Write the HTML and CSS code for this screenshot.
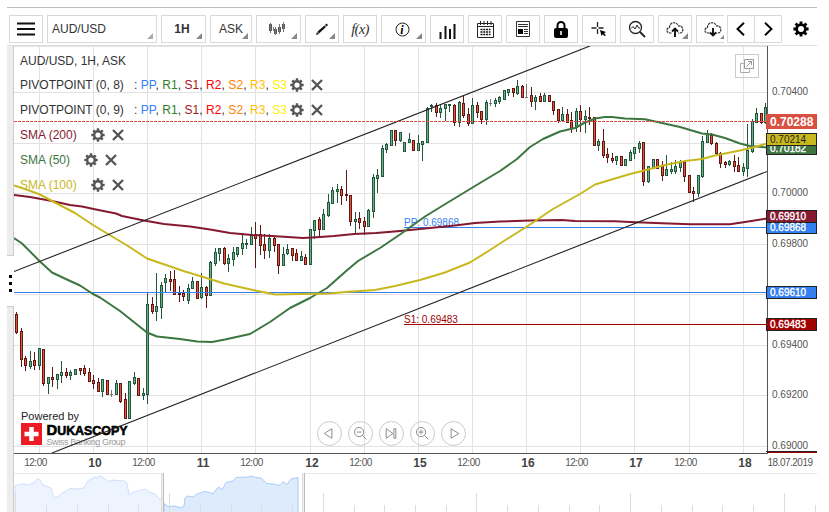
FILE: index.html
```
<!DOCTYPE html>
<html lang="en">
<head>
  <meta charset="utf-8">
  <title>AUD/USD Chart</title>
  <link rel="stylesheet" href="styles.css">
</head>
<body>
  <svg class="defs" width="0" height="0">
    <symbol id="gear" viewBox="0 0 16 16">
      <circle class="gear-ring" cx="8" cy="8" r="4.400"/>
      <path class="gear-teeth" d="M8 .4v2.800M8 12.800v2.800M.4 8h2.800M12.800 8h2.800M2.600 2.600l2 2M11.400 11.400l2 2M2.600 13.400l2-2M11.400 4.600l2-2"/>
    </symbol>
    <symbol id="cross" viewBox="0 0 12 12">
      <path d="M1 1l10 10M11 1L1 11" fill="none" stroke="#555" stroke-width="2.300"/>
    </symbol>
  </svg>

  <div class="app">
    <div class="toolbar">
      <button class="btn"><svg width="18" height="14"><path d="M0 1.500h18M0 7h18M0 12.500h18" stroke="#111" stroke-width="2.200"/></svg></button>
      <button class="btn symbol menu">AUD/USD</button>
      <button class="btn period menu">1H</button>
      <button class="btn side menu">ASK</button>
      <button class="btn medium menu shift">
        <svg width="16" height="14"><path d="M1.500 2v7M6.500 7v5M10.500 5v5M14.500 2v5" stroke="#111" stroke-width="2.400"/><path d="M1.500 1v10M4.500 5v4M6.500 5v8M10.500 2v10M14.500 0v10" stroke="#777" stroke-width="1"/></svg>
      </button>
      <button class="btn menu"><svg width="14" height="13"><path d="M1 12l1-3 2 2zM2.500 8.500l7-6 1.500 1.500-7 6.500zM10 2l1.500-1.500L13 2l-1.500 1.500z" fill="#111"/></svg></button>
      <button class="btn fx">f(x)</button>
      <button class="btn medium menu shift">
        <svg width="15" height="15"><circle cx="7.500" cy="7.500" r="6.500" fill="none" stroke="#222"/><text class="info" x="5.300" y="11.500">i</text></svg>
      </button>
      <button class="btn low"><svg width="17" height="16"><path d="M1.500 9v7M6.500 3v13M11 6v10M15.500 1v15" stroke="#111" stroke-width="2"/></svg></button>
      <button class="btn"><svg width="19" height="19"><path d="M1.500 3.500h16v14h-16zM1.500 6.500h16" fill="none" stroke="#222"/><path d="M4.500 1v4M8 1v4M11.500 1v4M15 1v4" stroke="#222"/><path d="M4.500 9.500h10M4.500 12h10M4.500 14.500h10" stroke="#111" stroke-width="1.600" stroke-dasharray="2 .8"/></svg></button>
      <button class="btn"><svg width="14" height="16"><path d="M.5.5h13v15H.5z" fill="none" stroke="#333"/><path d="M2 3.500h10M2 5.500h10M8 8.500h4M8 10.500h4M8 12.500h4" stroke="#333"/><path d="M2 8h5v5H2z" fill="#000"/></svg></button>
      <button class="btn"><svg width="14" height="17"><path d="M3.500 8V4.500a3.500 3.500 0 0 1 7 0V8" fill="none" stroke="#000" stroke-width="2"/><rect x="0" y="7" width="14" height="10" rx="2"/><path d="M7 10v4" stroke="#fff" stroke-width="1.600"/></svg></button>
      <button class="btn"><svg width="16" height="16"><path d="M6.500 1v5M6.500 8v5M.5 7h5M7.500 7h5" stroke="#222" stroke-width="1.300"/><path d="M9 9l6 2-2 1.200 1.800 2-1 1-2-2L10.500 15z"/></svg></button>
      <button class="btn"><svg width="18" height="18"><circle cx="7.500" cy="7.500" r="6" fill="none" stroke="#222" stroke-width="1.300"/><path d="M3 8.500l2-2 2 2.500 2-4 1.500 3H12" fill="none" stroke="#222"/><path d="M12 12l5 5" stroke="#222" stroke-width="1.800"/></svg></button>
      <button class="btn menu"><svg width="18" height="16"><path d="M5.500 12H4C0 12 0 7 3.500 6.500 3.500 1 10.500 0 12.500 5c5-1 6 6.500 1.500 7h-2" fill="none" stroke="#333" stroke-width="1.200" stroke-dasharray="2.500 .7"/><path d="M9 16V9M6 10.500L9 7.500l3 3" fill="none" stroke="#111" stroke-width="1.900"/></svg></button>
      <button class="btn menu clipped"><svg width="18" height="16"><path d="M5.500 12H4C0 12 0 7 3.500 6.500 3.500 1 10.500 0 12.500 5c5-1 6 6.500 1.500 7h-2" fill="none" stroke="#333" stroke-width="1.200" stroke-dasharray="2.500 .7"/><path d="M9 7v7M6 11.500l3 3 3-3" fill="none" stroke="#111" stroke-width="1.900"/></svg></button>
      <div class="pager">
        <button class="btn"><svg width="10" height="14"><path d="M8 .8L1.500 7 8 13.200" fill="none" stroke="#000" stroke-width="1.900"/></svg></button>
        <button class="btn"><svg width="10" height="14"><path d="M2 .8L8.500 7 2 13.200" fill="none" stroke="#000" stroke-width="1.900"/></svg></button>
      </div>
      <button class="settings"><svg width="16" height="16"><use href="#gear"/></svg></button>
    </div>

    <div class="workspace">
      <div class="gutter">
        <div class="grip"><i></i><i></i><i></i></div>
      </div>
      <div class="charts">
        <svg id="chart" class="chart" width="803" height="427" viewBox="14 46 803 427"></svg>
        <svg id="navigator" class="navigator" width="803" height="39" viewBox="14 473 803 39"></svg>

        <div class="legend">
          <div class="row title">AUD/USD, 1H, ASK</div>
          <div class="row"><span class="name">PIVOTPOINT (0, 8)</span><span class="levels">: <b class="pp">PP</b>, <b class="r1">R1</b>, <b class="s1">S1</b>, <b class="r2">R2</b>, <b class="s2">S2</b>, <b class="r3">R3</b>, <b class="s3">S3</b></span><svg class="cog"><use href="#gear"/></svg><svg class="close"><use href="#cross"/></svg></div>
          <div class="row"><span class="name">PIVOTPOINT (0, 9)</span><span class="levels">: <b class="pp">PP</b>, <b class="r1">R1</b>, <b class="s1">S1</b>, <b class="r2">R2</b>, <b class="s2">S2</b>, <b class="r3">R3</b>, <b class="s3">S3</b></span><svg class="cog"><use href="#gear"/></svg><svg class="close"><use href="#cross"/></svg></div>
          <div class="row sma"><span class="sma200">SMA (200)</span><svg class="cog"><use href="#gear"/></svg><svg class="close"><use href="#cross"/></svg></div>
          <div class="row sma"><span class="sma50">SMA (50)</span><svg class="cog"><use href="#gear"/></svg><svg class="close"><use href="#cross"/></svg></div>
          <div class="row sma"><span class="sma100">SMA (100)</span><svg class="cog"><use href="#gear"/></svg><svg class="close"><use href="#cross"/></svg></div>
        </div>

        <button class="popout"><svg width="14" height="14"><path d="M3.500 4.500h-3v9h9v-3" fill="none" stroke="#aaa"/><path d="M4.500.5h9v9h-9zM6.500 7.500l5-5M8 2.500h3.500V6" fill="none" stroke="#999"/></svg></button>

        <div class="controls">
          <button><svg viewBox="0 0 24 24"><path d="M14.500 7v10L6.500 12z"/></svg></button>
          <button><svg viewBox="0 0 24 24"><circle cx="10.500" cy="10.500" r="4.800"/><path d="M8 10.500h5M14 14l4 4"/></svg></button>
          <button><svg viewBox="0 0 24 24"><path d="M6.500 7v10l7-5zM14.500 7h2v10h-2z"/></svg></button>
          <button><svg viewBox="0 0 24 24"><circle cx="10.500" cy="10.500" r="4.800"/><path d="M8 10.500h5M10.500 8v5M14 14l4 4"/></svg></button>
          <button><svg viewBox="0 0 24 24"><path d="M9.500 7v10l8-5z"/></svg></button>
        </div>
      </div>
    </div>
  </div>
  <script src="chart.js"></script>
</body>
</html>
```
FILE: styles.css
```
body {
  margin: 0;
  background: #fff;
  font-family: "Liberation Sans", Arial, sans-serif;
  font-size: 12px;
  color: #333;
  overflow: hidden;
}

.defs {
  position: absolute;
}

.app {
  width: 810px;
  margin: 7px 0 0 7px;
  border-top: 1px solid #bbb;
}

/* toolbar */
.toolbar {
  display: flex;
  gap: 4px;
  box-sizing: border-box;
  height: 38px;
  padding: 7px 0 2px 2px;
  border-bottom: 1px solid #ddd;
}

.btn {
  position: relative;
  display: flex;
  align-items: center;
  justify-content: center;
  box-sizing: border-box;
  flex: none;
  width: 34px;
  height: 28px;
  padding: 0;
  border: 1px solid #d9d9d9;
  background: #fff;
  font: 12px "Liberation Sans", Arial, sans-serif;
  color: #333;
}

.menu::after {
  content: "";
  position: absolute;
  right: 3px;
  bottom: 3px;
  border-left: 6px solid transparent;
  border-bottom: 6px solid #888;
}

.symbol {
  width: 110px;
  justify-content: flex-start;
  padding-left: 4px;
}

.symbol::after {
  border-bottom-color: #aaa;
}

.period {
  width: 45px;
  padding-right: 3px;
  font-weight: bold;
}

.side {
  width: 42px;
}

.medium {
  width: 45px;
}

.shift {
  padding-right: 3px;
}

.low {
  padding-top: 3px;
}

.fx {
  font: italic 15px "Liberation Serif", serif;
  letter-spacing: -0.8px;
}

.info {
  font: italic bold 12px "Liberation Serif", serif;
}

.clipped {
  width: 28px;
  padding-left: 4px;
  border-right: none;
}

.clipped::after {
  right: 0;
  border-left-width: 4px;
  border-bottom-width: 4px;
}

.pager {
  display: flex;
  margin-left: -1px;
}

.pager .btn {
  width: 28px;
}

.pager .btn + .btn {
  margin-left: -1px;
}

.settings {
  display: flex;
  align-items: center;
  margin-left: 7px;
  padding: 0;
  height: 28px;
  border: none;
  background: none;
  color: #000;
}

.gear-ring {
  fill: none;
  stroke: currentColor;
  stroke-width: 2.8;
}

.gear-teeth {
  stroke: currentColor;
  stroke-width: 2.8;
}

/* workspace */
.workspace {
  display: flex;
}

.gutter {
  box-sizing: border-box;
  width: 7px;
  height: 466px;
  padding-top: 209px;
  border-right: 1px solid #ccc;
  background: #ededed;
}

.grip {
  display: flex;
  flex-direction: column;
  align-items: center;
  gap: 4px;
  box-sizing: border-box;
  width: 7px;
  height: 52px;
  padding-top: 19px;
  background: #fff;
  border-top: 1px solid #ccc;
  border-bottom: 1px solid #ccc;
}

.grip i {
  width: 3px;
  height: 3px;
  background: #000;
}

.charts {
  position: relative;
  width: 803px;
}

.chart,
.navigator {
  display: block;
}

.legend {
  position: absolute;
  left: 6px;
  top: 2px;
}

.row {
  display: flex;
  align-items: center;
  height: 25px;
  white-space: pre;
}

.row.title {
  height: 24px;
  padding-top: 1px;
  box-sizing: border-box;
}

.name {
  width: 114px;
}

.levels {
  letter-spacing: 0.06px;
}

.row b {
  font-weight: normal;
}

.pp { color: #347ff0; }
.r1 { color: #2e7d1e; }
.s1 { color: #a81616; }
.r2 { color: #f00; }
.s2 { color: #ff8000; }
.r3 { color: #ffc000; }
.s3 { color: #ffee00; }
.sma200 { color: #85192f; }
.sma50 { color: #3c7640; }
.sma100 { color: #c9b71e; }

.cog {
  width: 14px;
  height: 14px;
  margin-left: 3px;
  color: #555;
}

.close {
  width: 12px;
  height: 12px;
  margin-left: 7px;
}

.sma .cog {
  margin-left: 14px;
}

.popout {
  position: absolute;
  left: 721px;
  top: 8px;
  display: flex;
  align-items: center;
  justify-content: center;
  box-sizing: border-box;
  width: 24px;
  height: 24px;
  padding: 0;
  border: 1px solid #ccc;
  background: none;
}

.controls {
  position: absolute;
  left: 303px;
  top: 375px;
  display: flex;
  gap: 6px;
}

.controls button {
  box-sizing: border-box;
  width: 25px;
  height: 25px;
  padding: 0;
  border: 1px solid #ccc;
  border-radius: 50%;
  background: none;
}

.controls svg {
  display: block;
  width: 23px;
  height: 23px;
  fill: none;
  stroke: #888;
}

/* chart drawing */
.grid { stroke: #e2e2e2; }
.axis { stroke: #555; }
.trend { stroke: #222; stroke-width: 1.1; }
.last { stroke: #d85040; stroke-dasharray: 3 1; }
.level-pp { stroke: #347ff0; }
.level-s1 { stroke: #a00000; }
.line { fill: none; stroke-width: 2; stroke-linejoin: round; }
.line200 { stroke: #85192f; }
.line50 { stroke: #3c7640; }
.line100 { stroke: #c9b71e; }
.up { fill: #68b08b; stroke: #23573c; }
.down { fill: #e8523c; stroke: #5c1a12; }
.flat { fill: none; stroke: #777; }

.price { font-size: 10px; fill: #555; }
.hour { font-size: 10px; fill: #555; letter-spacing: -0.5px; text-anchor: middle; }
.day { font-size: 12px; font-weight: bold; fill: #444; text-anchor: middle; }
.date { font-size: 10px; fill: #555; letter-spacing: -0.5px; }
.text-pp { font-size: 10px; fill: #347ff0; }
.text-s1 { font-size: 10px; fill: #a00000; }
.tag { stroke: #222; }
.tag-text { font-size: 10px; fill: #fff; stroke: #fff; stroke-width: 0.35; }
.tag-dark { fill: #222; stroke: none; }
.tag-last { font-size: 12px; font-weight: bold; fill: #fff; }

.powered { font-size: 11px; fill: #222; }
.brand { font-weight: bold; fill: #000; stroke: #000; stroke-width: 0.6; font-size: 13px; }
.brand .cap { font-size: 15.5px; }
.group { font-size: 9px; fill: #999; }

.nav-line { stroke: #e8e8e8; }
.nav-out { fill: #edf4ff; stroke: #cfe1fa; }
.nav-in { fill: #deebfd; stroke: #a9cbf8; }
.nav-tick { stroke: #ddd; }
```
FILE: chart.js
```
// x, high, low, body top, body bottom, direction (u = up, d = down, f = flat)
var candles = [
  [16,312,334,314,332,'d'],[21,328,367,331,359,'d'],[25,356,371,358,365,'d'],[30,351,369,361,366,'u'],
  [34,352,370,360,365,'d'],[39,348,370,348,365,'u'],[43,349,386,349,383,'d'],[48,377,394,377,383,'u'],
  [52,367,387,377,379,'d'],[57,374,389,374,379,'u'],[61,361,383,372,375,'u'],[66,368,378,372,375,'d'],
  [70,370,380,372,375,'u'],[75,369,375,369,374,'u'],[80,368,375,368,370,'d'],[84,365,376,368,373,'d'],
  [89,368,382,372,381,'d'],[93,375,389,380,383,'d'],[98,378,392,382,391,'d'],[102,379,397,379,391,'u'],
  [107,380,395,380,394,'d'],[111,390,397,394,394,'f'],[116,380,395,383,394,'u'],[120,383,403,383,401,'d'],
  [125,393,419,399,418,'d'],[129,381,419,381,418,'u'],[134,372,385,377,383,'u'],[138,378,396,378,395,'d'],
  [143,388,400,393,395,'u'],[147,292,404,304,394,'u'],[152,297,314,304,311,'d'],[156,273,321,306,311,'u'],
  [161,282,319,285,307,'u'],[165,274,292,278,282,'u'],[170,271,291,279,281,'d'],[174,270,295,279,294,'d'],
  [179,286,302,293,294,'d'],[183,290,301,293,296,'d'],[188,284,304,288,300,'u'],[192,277,289,281,288,'u'],
  [197,281,299,281,298,'d'],[201,273,299,287,297,'u'],[206,286,308,287,295,'d'],[210,261,296,262,295,'u'],
  [215,248,266,252,263,'u'],[219,248,261,248,253,'u'],[224,247,265,248,263,'d'],[228,254,272,258,263,'u'],
  [233,247,266,252,259,'u'],[237,247,257,247,254,'u'],[242,233,255,243,248,'u'],[246,239,249,243,244,'u'],
  [251,227,245,234,244,'u'],[255,222,268,234,238,'d'],[260,225,255,234,245,'d'],[264,234,259,244,250,'d'],
  [269,234,258,238,250,'u'],[274,237,252,238,245,'d'],[278,244,274,244,265,'d'],[283,247,266,254,265,'u'],
  [287,244,255,249,253,'u'],[292,248,261,248,255,'d'],[296,249,261,253,260,'d'],[301,251,261,256,260,'u'],
  [305,254,265,257,264,'d'],[310,229,265,229,264,'u'],[314,220,239,220,230,'u'],[319,217,236,219,229,'d'],
  [323,209,230,214,229,'u'],[328,194,217,202,215,'u'],[332,187,204,190,203,'u'],[337,184,203,189,191,'u'],
  [341,186,205,189,195,'d'],[346,170,201,194,195,'d'],[350,195,226,195,221,'d'],[355,212,233,219,221,'u'],
  [359,212,229,218,222,'d'],[364,217,235,221,226,'d'],[368,209,227,210,226,'u'],[373,174,218,177,211,'u'],
  [377,169,193,175,178,'u'],[382,145,177,148,176,'u'],[386,143,153,144,149,'u'],[391,130,146,130,145,'u'],
  [395,130,146,130,140,'d'],[400,132,142,132,140,'u'],[404,142,152,142,151,'u'],[409,133,143,139,142,'u'],
  [413,140,151,140,150,'d'],[418,135,151,143,150,'u'],[422,141,161,141,144,'u'],[427,107,143,108,142,'u'],
  [431,104,112,105,106,'u'],[436,103,117,105,112,'d'],[440,104,118,108,112,'u'],[445,104,121,104,108,'u'],
  [449,104,112,104,105,'u'],[454,104,126,105,122,'d'],[459,101,127,102,122,'u'],[463,96,118,103,115,'d'],
  [468,108,126,114,123,'d'],[472,98,124,105,123,'u'],[477,102,118,105,112,'d'],[481,111,124,111,119,'d'],
  [486,100,125,102,119,'u'],[490,99,106,103,103,'f'],[495,98,107,100,103,'u'],[499,96,104,97,101,'u'],
  [504,90,100,90,99,'u'],[508,89,96,89,92,'u'],[513,88,97,88,92,'d'],[517,80,95,86,93,'u'],
  [522,85,98,86,97,'d'],[526,84,98,97,97,'f'],[531,87,107,95,101,'d'],[535,95,110,97,101,'u'],
  [540,93,102,96,101,'d'],[544,93,102,95,101,'u'],[549,95,102,95,101,'d'],[553,101,115,101,110,'d'],
  [558,109,123,109,120,'d'],[562,107,121,114,120,'u'],[567,109,123,114,122,'d'],[571,112,133,120,128,'d'],
  [576,108,132,111,127,'u'],[580,105,132,111,119,'d'],[585,110,133,116,119,'u'],[589,107,125,117,118,'d'],
  [594,117,146,117,145,'d'],[598,139,151,141,145,'u'],[603,129,158,141,155,'d'],[607,148,163,154,157,'d'],
  [612,153,163,158,160,'d'],[616,156,165,156,160,'u'],[621,156,166,156,165,'d'],[625,159,166,159,165,'u'],
  [630,150,161,152,160,'u'],[634,147,159,147,153,'u'],[639,141,153,143,148,'u'],[643,142,186,142,181,'d'],
  [648,166,183,166,181,'u'],[653,159,169,159,168,'u'],[657,159,169,159,168,'d'],[662,161,181,166,175,'d'],
  [666,155,176,169,175,'u'],[671,162,174,169,171,'u'],[675,160,174,166,171,'u'],[680,160,172,162,167,'u'],
  [684,162,182,162,176,'d'],[689,175,193,175,192,'d'],[693,187,202,191,193,'d'],[698,175,197,175,193,'u'],
  [702,136,178,141,176,'u'],[707,130,143,134,142,'u'],[711,133,145,135,143,'d'],[716,142,155,143,153,'d'],
  [720,152,168,153,163,'d'],[725,161,168,162,164,'d'],[729,160,166,161,164,'u'],[734,155,172,161,166,'d'],
  [738,157,172,165,171,'d'],[743,163,176,167,171,'u'],[747,124,177,150,168,'u'],[752,119,153,121,151,'u'],
  [756,108,123,113,122,'u'],[761,113,124,113,122,'d'],[765,103,124,107,122,'u']
];

var sma200 = '14,195 30,197 52,201 70,205 82,206.5 96,209.5 116,213.5 122,216 144,220.5 164,224 190,226.5 210,229.5 230,233 252,235 280,236.5 303,238 320,237 334,236 354,234 376,233 400,231 430,228 455,225.5 475,223 500,221.5 530,220.5 562,220 575,221 615,221.2 630,222 662,223.2 690,224.3 730,224.3 745,222 767,218.5';
var sma100 = '14,185.5 25,189 40,194.5 52,201 75,213 93,225 108,234 128,246 147,258.5 185,271.5 200,276 224,283.5 253,290 275,294.5 330,293.5 345,292 375,290 395,286 420,280 445,272.5 470,262.5 490,250 507,239 527,226.5 553,209 580,194 595,184.5 610,180 630,174 650,169 665,165 685,161 702,159 715,155.5 740,150.5 755,147 767,143.5';
var sma50 = '14,238 22,243.5 40,261.5 52,272.5 68,280 80,285.5 93,294 100,297.5 120,311 147,332.5 157,336.5 180,339 197,341.5 212,342 225,339.5 250,334 270,322 290,308 310,298 327,288 345,272 358,261 380,248 400,234.5 425,216.5 447,203 475,186 500,171 517,159 530,147 543,139 560,131.5 575,128 585,122.5 595,118.5 605,117 612,117 625,118.5 645,119.3 662,123 680,127 702,133.5 712,134.5 725,138 740,143.5 750,146 767,147.5';

function line(cls, x1, y1, x2, y2) {
  return '<line class="' + cls + '" x1="' + x1 + '" y1="' + y1 + '" x2="' + x2 + '" y2="' + y2 + '"/>';
}

function text(cls, x, y, value) {
  return '<text class="' + cls + '" x="' + x + '" y="' + y + '">' + value + '</text>';
}

function tag(y, h, color, value, cls) {
  return '<rect class="tag" x="766.5" y="' + y + '" width="50" height="' + h + '" fill="' + color + '"/>' +
    text(cls || 'tag-text', 770, y + h - 2.5, value);
}

var gridX = [39.5,93.5,147.5,201.5,255.5,310.5,364.5,418.5,472.5,526.5,580.5,634.5,689.5,743.5];
var gridY = [92.5,143.5,193.5,244.5,294.5,345.5,395.5,446.5];
var days = ['10','11','12','15','16','17','18'];

var out = '';
gridX.forEach(function (x) { out += line('grid', x, 46, x, 453); });
gridY.forEach(function (y) { out += line('grid', 14, y, 767, y); });
out += line('grid', 14, 46.5, 767, 46.5);

// branding sits under the series
out += text('powered', 21, 420, 'Powered by');
out += '<rect x="21" y="423" width="21" height="22" fill="#ed1c24"/>';
out += '<path d="M24.5 434h14M31.5 427v14" stroke="#fff" stroke-width="4.5"/>';
out += '<text class="brand" x="46.5" y="435" textLength="81" lengthAdjust="spacingAndGlyphs"><tspan class="cap">D</tspan>UKASCOPY</text>';
out += '<text class="group" x="46.5" y="445" textLength="79">Swiss Banking Group</text>';

candles.forEach(function (c) {
  var x = c[0] + 0.5;
  var cls = c[5] === 'u' ? 'up' : c[5] === 'd' ? 'down' : 'flat';
  out += line(cls, x, c[1], x, c[2]);
  if (cls === 'flat') {
    out += line(cls, x - 1.5, c[3] + 0.5, x + 1.5, c[3] + 0.5);
  } else {
    out += '<rect class="' + cls + '" x="' + (x - 1) + '" y="' + (c[3] + 0.5) + '" width="2" height="' + (c[4] - c[3]) + '"/>';
  }
});

out += text('text-pp', 404, 226, 'PP: 0.69868') + text('text-s1', 404, 323, 'S1: 0.69483');
out += line('level-pp', 404, 227.5, 767, 227.5);
out += line('level-pp', 14, 292.5, 767, 292.5);
out += line('level-s1', 404, 324.5, 767, 324.5);
out += '<polyline class="line line200" points="' + sma200 + '"/>';
out += '<polyline class="line line50" points="' + sma50 + '"/>';
out += '<polyline class="line line100" points="' + sma100 + '"/>';
out += line('trend', 14, 271.5, 590, 46) + line('trend', 52, 453, 767, 171.5);
out += line('last', 14, 121.5, 767, 121.5);

// axes
out += line('axis', 767.5, 46, 767.5, 454) + line('axis', 14, 453.5, 768, 453.5);
[['0.70400',95],['0.70000',196],['0.69800',247],['0.69400',348],['0.69200',398],['0.69000',449]].forEach(function (p) {
  out += text('price', 772, p[1], p[0]);
});
gridX.forEach(function (x, i) {
  if (i % 2) out += text('day', x + 1.5, 467, days[(i - 1) / 2]);
  else out += text('hour', x - 4, 466, '12:00');
});
out += text('date', 767.5, 466, '18.07.2019');

out += tag(143.5, 11, '#3c7640', '0.70182');
out += tag(133.5, 12, '#c9b71e', '0.70214', 'tag-text tag-dark');
out += '<rect x="766" y="114" width="51" height="15" fill="#d85040"/>' + text('tag-last', 770, 125.5, '0.70288');
out += tag(210.5, 12, '#85192f', '0.69910');
out += tag(222.5, 11, '#347ff0', '0.69868');
out += tag(286.5, 12, '#347ff0', '0.69610');
out += tag(318.5, 12, '#a00000', '0.69483');
out += '<path d="M766 451.5h51" stroke="#222"/><path d="M767 452.5h50" stroke="#a00000"/>';
document.getElementById('chart').innerHTML = out;

// navigator
var left = '15,485.5 23,484 28,485 34,482.5 37,479 40,480 43,485 51,488 54,497.5 58,496.5 62,493 66,491.5 70,488.5 75,489 80,488.5 84,488 88,480.5 91,479.5 94,477 97,478 99,475.5 103,477.5 108,481.5 113,480 124,481 127,483 129,494.5 134,492 141,490 145,489 149,492 155,494 159,498.5 162,499.5';
var right = '164,503.5 168,506.5 175,506 181,508 184,506 185,498 188,496 193,497 198,493.5 205,491.5 213,493.5 216,489.5 219,487 222,490 226,482.5 233,481 236,477.5 248,477 251,476 256,477.5 261,478 267,483.5 273,484 280,485.5 283,481.5 287,484.5 291,479 298,477.5';
var nav = '<polygon class="nav-out" points="' + left + ' 162,514 15,514"/>';
nav += '<polygon class="nav-in" points="' + right + ' 298,514 164,514"/>';
nav += line('nav-line', 14, 473.5, 162, 473.5) + line('nav-line', 303, 473.5, 817, 473.5);
for (var i = 0; i < 27; i++) {
  var tx = Math.round(15.9 + i * 30.74 - 0.5) + 0.5;
  nav += line('nav-tick', tx, i % 5 ? 505 : 493, tx, 512);
}
[161.5, 302.5].forEach(function (x) {
  nav += '<path d="M' + x + ' 473v39" stroke="#ddd"/><path d="M' + (x + 1) + ' 473v39" stroke="#eee"/><path d="M' + (x + 2) + ' 473v39" stroke="#bbb"/>';
});
document.getElementById('navigator').innerHTML = nav;
```
